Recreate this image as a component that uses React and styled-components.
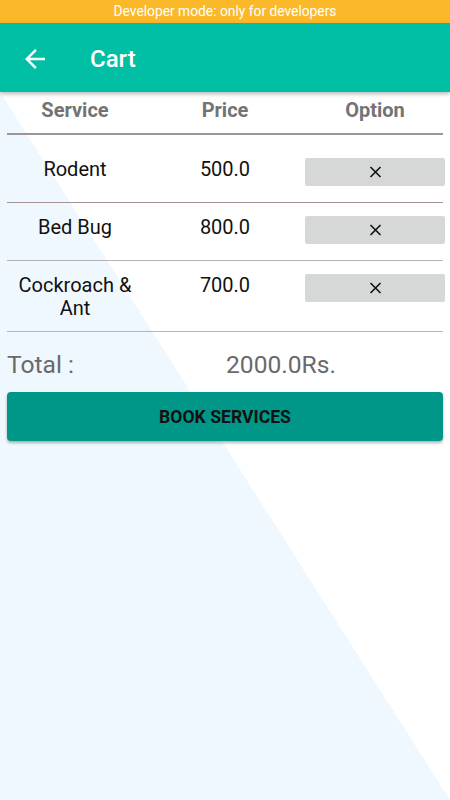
import React from "react"
import styled, { createGlobalStyle } from "styled-components"

const GlobalStyle = createGlobalStyle`
    html, body {
        margin: 0;
        padding: 0;
        background: #fff;
        font-family: Roboto, "Noto Sans", "Liberation Sans", sans-serif;
    }
    * { box-sizing: border-box; }
`

const Page = styled.div`
    width: 450px;
    min-height: 800px;
    display: flex;
    flex-direction: column;
`

const StatusBar = styled.div`
    height: 23px;
    background: #fbb829;
    color: #fff;
    font-size: 13.8px;
    line-height: 23px;
    text-align: center;
`

const AppBar = styled.header`
    position: relative;
    z-index: 1;
    height: 69px;
    background: #00bfa5;
    display: flex;
    align-items: center;
    padding: 2px 0 0 20px;
    gap: 40px;
    box-shadow: 0 2px 4px rgba(0,0,0,0.28);
    color: #fff;
    h1 {
        margin: 0;
        font-size: 24px;
        font-weight: 500;
    }
`

const Content = styled.main`
    flex: 1;
    padding-top: 5px;
    background: linear-gradient(to top right, #f0f8ff 50%, #ffffff 50%);
`

const Row = styled.div`
    display: grid;
    grid-template-columns: 150px 150px 150px;
    align-items: start;
`

const HeadCell = styled.div`
    text-align: center;
    font-size: 20px;
    line-height: 26px;
    font-weight: 700;
    color: #737373;
`

const Divider = styled.div`
    margin: ${p => p.$gap || 0} 7px 0;
    height: ${p => p.$thick ? "2px" : "1px"};
    background: ${p => p.$color || "#b3abab"};
`

const Spacer = styled.div`
    height: 10px;
`

const Cell = styled.div`
    text-align: center;
    font-size: 20px;
    line-height: 23px;
    color: #111;
    padding: 13px 6px 11px;
`

const RemoveButton = styled.button`
    margin: 13px 5px 16px;
    height: 28px;
    border: none;
    border-radius: 2px;
    background: #d6d7d7;
    display: flex;
    align-items: center;
    justify-content: center;
    cursor: pointer;
`

const TotalRow = styled.div`
    display: grid;
    grid-template-columns: 219px 1fr;
    margin: 18px 0 0 7px;
    font-size: 24.6px;
    line-height: 30px;
    color: #6a6a6a;
`

const BookButton = styled.button`
    display: block;
    width: calc(100% - 14px);
    margin: 12px 7px 0;
    height: 49px;
    border: none;
    border-radius: 4px;
    background: #009688;
    box-shadow: 0 2px 3px rgba(0,0,0,0.3);
    font-family: inherit;
    font-size: 17.6px;
    font-weight: 700;
    color: #111;
    cursor: pointer;
`

const BackArrow = () => (
    <svg width="30" height="30" viewBox="0 0 24 24" fill="#fff">
        <path d="M20 11H7.83l5.59-5.59L12 4l-8 8 8 8 1.41-1.41L7.83 13H20v-2z" />
    </svg>
)

const Cross = () => (
    <svg width="13" height="12" viewBox="0 0 13 12">
        <path d="M1.5 1 L11.5 11 M11.5 1 L1.5 11" stroke="#111" strokeWidth="1.6" />
    </svg>
)

const items = [
    { name: "Rodent", price: "500.0", line: "#a39393" },
    { name: "Bed Bug", price: "800.0", line: "#b8b3b3" },
    { name: "Cockroach & Ant", price: "700.0", line: "#b8b5b5" },
]

export default function App() {
    return (
        <Page>
            <GlobalStyle />
            <StatusBar>Developer mode: only for developers</StatusBar>
            <AppBar>
                <BackArrow />
                <h1>Cart</h1>
            </AppBar>
            <Content>
                <Row>
                    <HeadCell>Service</HeadCell>
                    <HeadCell>Price</HeadCell>
                    <HeadCell>Option</HeadCell>
                </Row>
                <Divider $thick $gap="10px" $color="#9e9696" />
                <Spacer />
                {items.map(item => (
                    <React.Fragment key={item.name}>
                        <Row>
                            <Cell>{item.name}</Cell>
                            <Cell>{item.price}</Cell>
                            <RemoveButton aria-label="remove"><Cross /></RemoveButton>
                        </Row>
                        <Divider $color={item.line} />
                    </React.Fragment>
                ))}
                <TotalRow>
                    <span>Total :</span>
                    <span>2000.0Rs.</span>
                </TotalRow>
                <BookButton>BOOK SERVICES</BookButton>
            </Content>
        </Page>
    )
}
